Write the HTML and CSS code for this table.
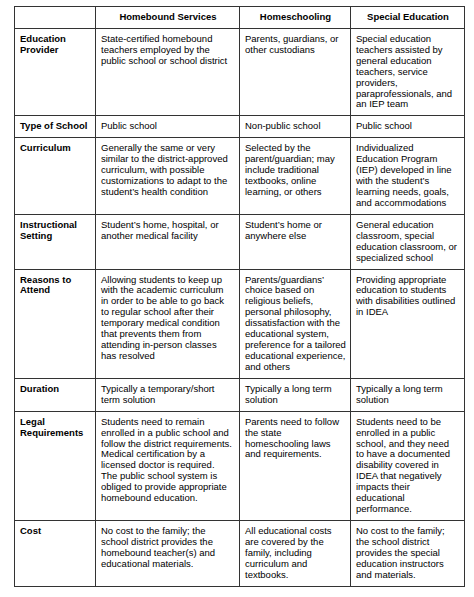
FILE: index.html
```html
<!DOCTYPE html>
<html lang="en">
<head>
<meta charset="utf-8">
<title>Homebound vs Homeschooling vs Special Education</title>
<link rel="stylesheet" href="styles.css">
</head>
<body>
<table class="compare">
  <colgroup>
    <col class="c1">
    <col class="c2">
    <col class="c3">
    <col class="c4">
  </colgroup>
  <thead>
    <tr>
      <th></th>
      <th>Homebound Services</th>
      <th>Homeschooling</th>
      <th>Special Education</th>
    </tr>
  </thead>
  <tbody>
    <tr>
      <th>Education Provider</th>
      <td class="wide">State-certified homebound teachers employed by the public school or school district</td>
      <td>Parents, guardians, or other custodians</td>
      <td class="wide">Special education teachers assisted by general education teachers, service providers, paraprofessionals, and an IEP team</td>
    </tr>
    <tr>
      <th>Type of School</th>
      <td class="wide">Public school</td>
      <td>Non-public school</td>
      <td class="wide">Public school</td>
    </tr>
    <tr>
      <th>Curriculum</th>
      <td class="wide">Generally the same or very similar to the district-approved curriculum, with possible customizations to adapt to the student’s health condition</td>
      <td>Selected by the parent/guardian; may include traditional textbooks, online learning, or others</td>
      <td class="wide">Individualized Education Program (IEP) developed in line with the student’s learning needs, goals, and accommodations</td>
    </tr>
    <tr>
      <th>Instructional Setting</th>
      <td class="wide">Student’s home, hospital, or another medical facility</td>
      <td>Student’s home or anywhere else</td>
      <td class="wide">General education classroom, special education classroom, or specialized school</td>
    </tr>
    <tr>
      <th>Reasons to Attend</th>
      <td class="wide">Allowing students to keep up with the academic curriculum in order to be able to go back to regular school after their temporary medical condition that prevents them from attending in-person classes has resolved</td>
      <td>Parents/guardians’ choice based on religious beliefs, personal philosophy, dissatisfaction with the educational system, preference for a tailored educational experience, and others</td>
      <td class="wide">Providing appropriate education to students with disabilities outlined in IDEA</td>
    </tr>
    <tr>
      <th>Duration</th>
      <td class="wide">Typically a temporary/short term solution</td>
      <td>Typically a long term solution</td>
      <td class="wide">Typically a long term solution</td>
    </tr>
    <tr>
      <th>Legal Requirements</th>
      <td class="wide">Students need to remain enrolled in a public school and follow the district requirements. Medical certification by a licensed doctor is required. The public school system is obliged to provide appropriate homebound education.</td>
      <td>Parents need to follow the state homeschooling laws and requirements.</td>
      <td class="wide">Students need to be enrolled in a public school, and they need to have a documented disability covered in IDEA that negatively impacts their educational performance.</td>
    </tr>
    <tr>
      <th>Cost</th>
      <td class="wide">No cost to the family; the school district provides the homebound teacher(s) and educational materials.</td>
      <td>All educational costs are covered by the family, including curriculum and textbooks.</td>
      <td class="wide">No cost to the family; the school district provides the special education instructors and materials.</td>
    </tr>
  </tbody>
</table>
</body>
</html>
```

FILE: styles.css
```css
html, body {
  background: #ffffff;
}

body {
  margin: 6px 0 0 14px;
  font-family: "Liberation Sans", Arial, sans-serif;
  font-size: 9.5px;
  line-height: 1.15;
  color: #000000;
}

.compare {
  border-collapse: collapse;
  table-layout: fixed;
  width: 450px;
}

.c1 { width: 81px; }
.c2 { width: 144px; }
.c3 { width: 111px; }
.c4 { width: 114px; }

.compare th,
.compare td {
  border: 1px solid #333333;
  padding: 5px 4px 5px 5px;
  vertical-align: top;
  text-align: left;
}

.compare td.wide {
  padding-right: 6.5px;
}

.compare th {
  font-weight: bold;
}

.compare thead th {
  text-align: center;
  vertical-align: middle;
}
```
